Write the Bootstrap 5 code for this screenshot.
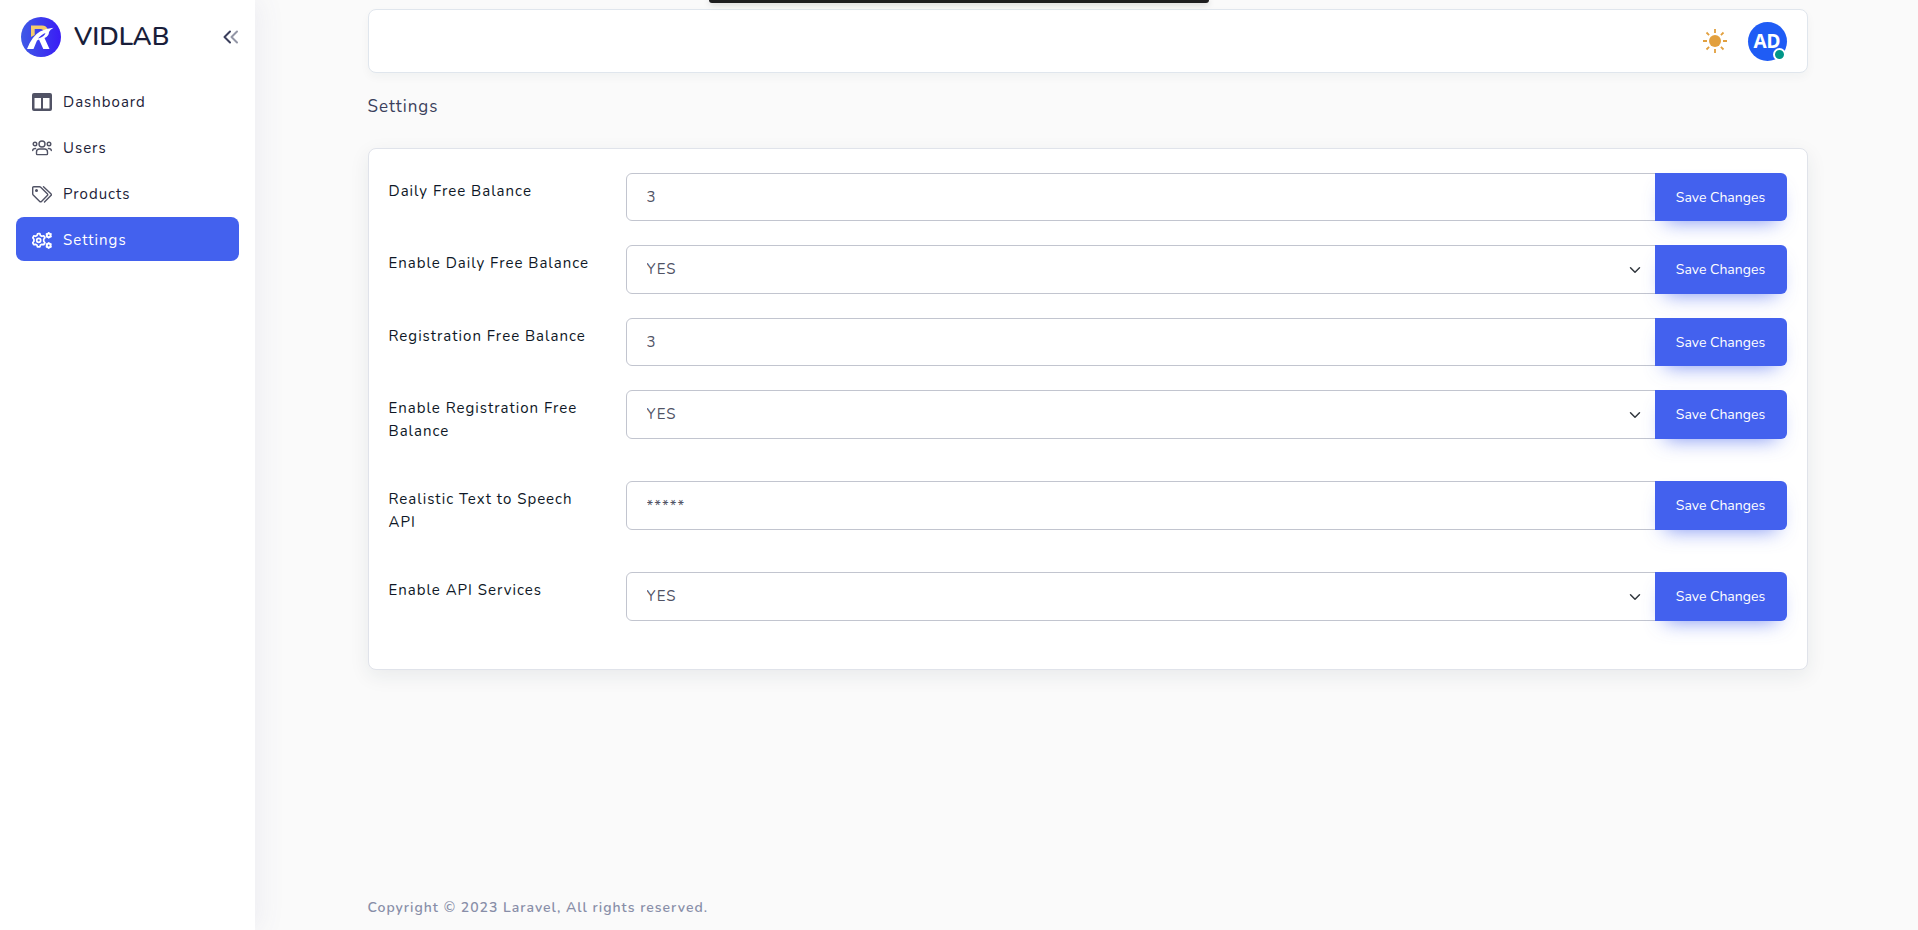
<!DOCTYPE html>
<html lang="en">
<head>
<meta charset="utf-8">
<meta name="viewport" content="width=device-width, initial-scale=1">
<title>VIDLAB - Settings</title>
<link href="https://cdn.jsdelivr.net/npm/bootstrap@5.3.0/dist/css/bootstrap.min.css" rel="stylesheet">
<style>
  :root { --brand: #4361ee; --ink: #0e1726; --muted: #515365; --line: #c2c5cf; }
  body { font-family: Nunito, Lato, sans-serif; font-size: 15px; line-height: 23px; letter-spacing: 1px; color: var(--ink); background: #fafafa; }
  .side-panel { flex: 0 0 255px; background: #fff; box-shadow: 5px 0 25px rgba(94, 92, 154, .08); padding: 17px 16px 0; }
  .brand-row { padding-left: 5px; height: 40px; margin-bottom: 22px; }
  .brand-link { gap: 13px; }
  .brand-name { font-size: 26px; line-height: 40px; font-weight: 600; letter-spacing: 0; color: #191e3a; }
  .side-nav { gap: 2px; }
  .side-link { height: 44px; padding: 2px 16px 0; gap: 11px; border-radius: 8px; color: #1c2238; text-decoration: none; }
  .side-link svg { color: var(--muted); }
  .side-link.active { background: var(--brand); color: #fff; }
  .side-link.active svg { color: #fff; }
  .icon-btn { border: 0; padding: 0; background: none; line-height: 0; }
  .content-area { padding-left: 2px; }
  .page-wrap { max-width: 1440px; }
  .top-bar { height: 64px; margin-top: 9px; padding: 0 20px; background: #fff; border: 1px solid #e0e6ed; border-radius: 8px; box-shadow: 0 4px 10px rgba(31, 45, 61, .04); }
  .avatar { width: 39px; height: 39px; border-radius: 50%; background: #1f5cf5; color: #fff; font: 700 19px/39px "Noto Sans", sans-serif; letter-spacing: 0; }
  .status-dot { right: 1px; bottom: 0; width: 13px; height: 13px; border: 2px solid #fff; border-radius: 50%; background: #009688; }
  .page-title { font-size: 17px; line-height: 24px; font-weight: 400; color: #3b3f5c; margin: 22px 0 29px; }
  .panel { background: #fff; border: 1px solid #e0e3ea; border-radius: 8px; padding: 24px 20px; box-shadow: 0 6px 20px rgba(31, 45, 61, .08); }
  .field-row { margin-bottom: 24px; }
  .field-row label { padding-top: 7px; margin-bottom: 14px; }
  .input-group .form-control, .input-group .form-select { font-size: 15px; line-height: 23px; letter-spacing: 1px; color: var(--muted); border: 1px solid var(--line); padding: 0 20px; border-radius: 6px; }
  .input-group .form-control { height: 48px; }
  .input-group .form-select { height: 49px; background-size: 14px 12px; background-position: right 13px center; }
  .input-group .form-control.secret { height: 49px; }
  .btn-save { width: 132px; font-size: 14px; letter-spacing: 0; color: #fff; background: var(--brand); border: 0; border-radius: 6px; padding: 0; box-shadow: 0 10px 20px -10px rgba(67, 97, 238, .7); }
  .btn-save:hover { background: #3651d4; color: #fff; }
  .page-foot { font-size: 14px; line-height: 20px; font-weight: 600; color: #888ea8; padding-bottom: 12px; }
  .share-bar { top: 0; left: 50%; width: 500px; height: 3px; margin-left: -250px; background: #1d1d1f; border-radius: 0 0 8px 8px; box-shadow: 0 1px 6px rgba(0, 0, 0, .25); }
</style>
</head>
<body>
<div class="d-flex min-vh-100 position-relative">
  <aside class="side-panel">
    <div class="brand-row d-flex align-items-center">
      <a href="#" class="brand-link d-flex align-items-center text-decoration-none flex-grow-1">
        <svg width="40" height="40" viewBox="0 0 40 40" aria-hidden="true">
          <defs><linearGradient id="logoFill"><stop offset="0" stop-color="#3f5ae6"/><stop offset="1" stop-color="#3a1cf5"/></linearGradient></defs>
          <circle cx="20" cy="20" r="20" fill="url(#logoFill)"/>
          <path d="M10 20V8.500h11q4.500 0 6 4.300l-4 1.700q-1-2.500-3-2.500H13.700V18Z" fill="#f5cc6c"/>
          <path d="M6 32q5-13 13-17.500 6-3 13.500-3.800-3.500 1.800-4.500 4.300 0 4-4.500 6l5 11h-6.200l-4.300-9.500-2 1-3.500 8.500Z" fill="#fff"/>
          <path d="M17 21.500q4-4.500 7.500-5.500-1 3.700-7.500 5.500Z" fill="#3b33ef"/>
        </svg>
        <span class="brand-name">VIDLAB</span>
      </a>
      <button type="button" class="icon-btn" aria-label="Collapse sidebar">
        <svg width="17" height="16" viewBox="0 0 17 16" fill="none" stroke="#3b3f5c" stroke-width="2" stroke-linecap="round" stroke-linejoin="round"><path d="M8 2.500 2.500 8 8 13.500"/><path d="M15 2.500 9.500 8l5.500 5.500" opacity=".55"/></svg>
      </button>
    </div>
    <nav class="side-nav d-grid">
      <a href="#" class="side-link d-flex align-items-center">
        <svg width="20" height="18" viewBox="0 0 20 18" fill="currentColor" fill-rule="evenodd" aria-hidden="true"><path d="M2 0h16a2 2 0 0 1 2 2v14a2 2 0 0 1-2 2H2a2 2 0 0 1-2-2V2a2 2 0 0 1 2-2Zm.5 5v10.500H9V5Zm8.500 0v10.500h6.500V5Z"/></svg>
        <span>Dashboard</span></a>
      <a href="#" class="side-link d-flex align-items-center">
        <svg width="20" height="16" viewBox="0 0 20 16" fill="none" stroke="currentColor" stroke-width="1.400" stroke-linecap="round" aria-hidden="true"><circle cx="10" cy="4" r="3"/><circle cx="3" cy="4" r="1.800"/><circle cx="17" cy="4" r="1.800"/><path d="M4.500 13.800V12q0-3 3-3h5q3 0 3 3v1.800q0 .8-.8.800H5.300q-.8 0-.8-.8ZM.7 10.500Q.8 8.500 3.600 8.500M19.300 10.500q-.1-2-2.900-2"/></svg>
        <span>Users</span></a>
      <a href="#" class="side-link d-flex align-items-center">
        <svg width="20" height="17" viewBox="0 0 20 17" fill="none" stroke="currentColor" stroke-width="1.400" stroke-linecap="round" stroke-linejoin="round" aria-hidden="true"><path d="M.7 1.700v6q0 .7.500 1.200l6.500 6.500q.9.900 1.800 0l5.800-5.800q.9-.9 0-1.800L8.700 1.200Q8.200.7 7.500.7h-5.800q-1 0-1 1Z"/><path d="m11.500.8 7.400 7q.9.900 0 1.800l-6.400 6.400"/><circle cx="4.500" cy="4.500" r=".8" fill="currentColor"/></svg>
        <span>Products</span></a>
      <a href="#" class="side-link active d-flex align-items-center" aria-current="page">
        <svg width="20" height="17" viewBox="0 0 20 17" fill="none" stroke="currentColor" stroke-width="1.700" stroke-linejoin="round" aria-hidden="true"><path d="m5.500 1.900.6-.2h1.800l.5 1.700 1.500.9 1.800-.5 1.200 2-1.200 1.500v1.900l1.200 1.500-1.200 2-1.800-.4-1.500.8-.5 1.700H5.400l-.5-1.700-1.500-.8-1.700.4-1-2 1.200-1.500V7.300L.8 5.800l1-2 1.700.5 1.500-.9Z"/><circle cx="6.700" cy="8.300" r="2"/><g stroke-width="2"><circle cx="16.700" cy="3.300" r="1.900"/><circle cx="16.700" cy="13.500" r="1.900"/></g><g stroke-width="1.300"><path d="M16.700 0v1M16.700 5.600v1M13.800 1.600l.9.500M18.700 4.400l.9.600M13.800 5l.9-.6M18.700 2.100l.9-.5M16.700 10.200v1M16.700 15.800v1M13.800 11.800l.9.500M18.700 14.600l.9.600M13.800 15.200l.9-.6M18.700 12.300l.9-.5"/></g></svg>
        <span>Settings</span></a>
    </nav>
  </aside>

  <div class="content-area flex-grow-1 d-flex flex-column">
    <div class="page-wrap w-100 mx-auto flex-grow-1 d-flex flex-column">
      <header class="top-bar d-flex align-items-center justify-content-end">
        <button type="button" class="icon-btn me-3" aria-label="Toggle theme">
          <svg width="26" height="26" viewBox="0 0 26 26" fill="#e2a03f" stroke="#e2a03f" stroke-width="1.800"><circle cx="13" cy="13" r="6" stroke="none"/><path d="M13 1v4M13 21v4M1 13h4M21 13h4M4.500 4.500l2.600 2.600M18.900 18.900l2.600 2.600M4.500 21.500l2.600-2.600M18.900 7.100l2.600-2.600"/></svg>
        </button>
        <button type="button" class="icon-btn avatar position-relative ms-1" aria-label="Account AD">AD<span class="status-dot position-absolute"></span></button>
      </header>

      <h1 class="page-title">Settings</h1>

      <main class="panel">
        <form class="row field-row">
          <div class="col-2"><label for="dailyBalance">Daily Free Balance</label></div>
          <div class="col-10"><div class="input-group"><input id="dailyBalance" type="text" class="form-control" value="3"><button type="button" class="btn btn-save">Save Changes</button></div></div>
        </form>
        <form class="row field-row">
          <div class="col-2"><label for="dailyEnable">Enable Daily Free Balance</label></div>
          <div class="col-10"><div class="input-group"><select id="dailyEnable" class="form-select"><option>YES</option><option>NO</option></select><button type="button" class="btn btn-save">Save Changes</button></div></div>
        </form>
        <form class="row field-row">
          <div class="col-2"><label for="regBalance">Registration Free Balance</label></div>
          <div class="col-10"><div class="input-group"><input id="regBalance" type="text" class="form-control" value="3"><button type="button" class="btn btn-save">Save Changes</button></div></div>
        </form>
        <form class="row field-row">
          <div class="col-2"><label for="regEnable">Enable Registration Free Balance</label></div>
          <div class="col-10"><div class="input-group"><select id="regEnable" class="form-select"><option>YES</option><option>NO</option></select><button type="button" class="btn btn-save">Save Changes</button></div></div>
        </form>
        <form class="row field-row">
          <div class="col-2"><label for="speechApi">Realistic Text to Speech API</label></div>
          <div class="col-10"><div class="input-group"><input id="speechApi" type="text" class="form-control secret" value="*****"><button type="button" class="btn btn-save">Save Changes</button></div></div>
        </form>
        <form class="row field-row">
          <div class="col-2"><label for="apiEnable">Enable API Services</label></div>
          <div class="col-10"><div class="input-group"><select id="apiEnable" class="form-select"><option>YES</option><option>NO</option></select><button type="button" class="btn btn-save">Save Changes</button></div></div>
        </form>
      </main>

      <footer class="page-foot mt-auto">Copyright © 2023 Laravel, All rights reserved.</footer>
    </div>
  </div>
  <div class="share-bar position-absolute"></div>
</div>
<script src="https://cdn.jsdelivr.net/npm/bootstrap@5.3.0/dist/js/bootstrap.bundle.min.js"></script>
</body>
</html>
